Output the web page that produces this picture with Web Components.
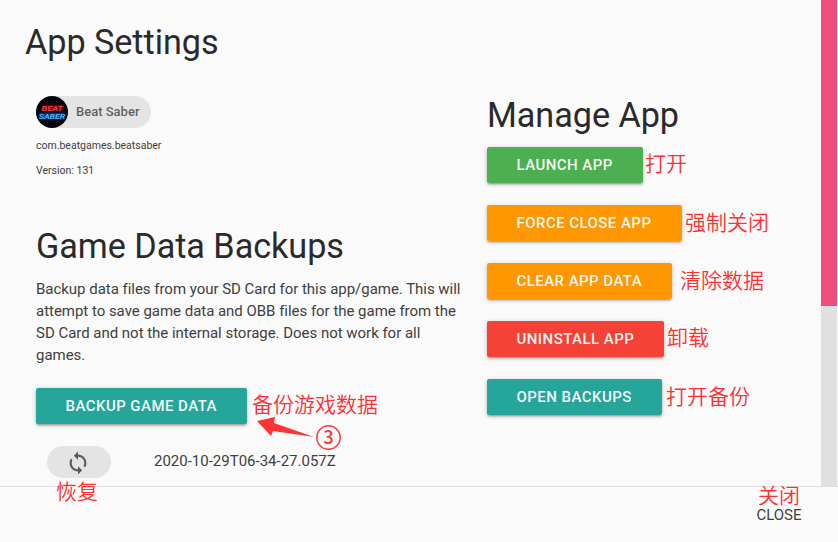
<!DOCTYPE html>
<html lang="en"><head><meta charset="utf-8"><title>App Settings</title>
<style>html,body{margin:0;height:100%;overflow:hidden;background:#fafafa}</style></head><body>
<settings-dialog></settings-dialog>
<script>
const define = (name, html) => customElements.define(name, class extends HTMLElement {
  constructor() {
    super();
    const t = document.createElement('template');
    t.innerHTML = html;
    this.attachShadow({mode: 'open'}).append(t.content.cloneNode(true));
  }
});

define('app-heading', `<style>:host{display:block;font:400 34.2px/38px Roboto,sans-serif;letter-spacing:-.04px;color:#2a2a2a;white-space:nowrap}</style><slot></slot>`);

define('action-button', `<style>
:host{display:flex;box-sizing:border-box;width:var(--w);height:36px;padding-left:29.5px;align-items:center;border-radius:2px;background:var(--bg);color:rgba(255,255,255,.95);font:500 15px/36px Roboto,sans-serif;letter-spacing:.45px;white-space:nowrap;box-shadow:0 2px 2px 0 rgba(0,0,0,.14),0 3px 1px -2px rgba(0,0,0,.12),0 1px 5px 0 rgba(0,0,0,.2)}
</style><slot></slot>`);

define('app-chip', `<style>
:host{display:flex;width:115px;height:32px;border-radius:16px;background:#e4e4e4;align-items:center;font:500 13px/32px Roboto,sans-serif;letter-spacing:0;color:rgba(0,0,0,.6)}
svg{display:block;margin-right:8px}
</style><svg width="32" height="32" viewBox="0 0 32 32">
<defs><filter id="g" x="-20%" y="-50%" width="140%" height="200%"><feGaussianBlur stdDeviation="1.5"/></filter></defs>
<circle cx="16" cy="16" r="16" fill="#020308"/>
<rect x="6" y="9" width="21" height="6" fill="#a30d18" opacity=".65" filter="url(#g)"/><rect x="3" y="17" width="26" height="6" fill="#0755a8" opacity=".8" filter="url(#g)"/>
<g font-family="Roboto,sans-serif" font-size="8" font-weight="500" font-style="italic"><text x="5.5" y="14.700" textLength="21.5" lengthAdjust="spacingAndGlyphs" fill="#ff4048">BEAT</text>
<text x="2.7" y="22.7" textLength="26.5" lengthAdjust="spacingAndGlyphs" fill="#58b9ff">SABER</text></g></svg><slot></slot>`);

define('restore-chip', `<style>:host{display:flex;width:64px;height:32px;border-radius:16px;background:#e4e4e4;align-items:center;justify-content:center}svg{display:block;margin:1px 2px 0 0}</style>
<svg width="24" height="24" viewBox="0 0 24 24" fill="#5b5b5b"><path d="M12 4V1L8 5l4 4V6c3.310 0 6 2.690 6 6 0 1.010-.25 1.970-.7 2.800l1.460 1.460C19.540 15.030 20 13.570 20 12c0-4.420-3.580-8-8-8zm0 14c-3.310 0-6-2.690-6-6 0-1.010.25-1.970.7-2.800L5.240 7.740C4.460 8.970 4 10.430 4 12c0 4.420 3.580 8 8 8v3l4-4-4-4v3z" transform="translate(-.6 -.6) scale(1.050)"/></svg>`);

define('dialog-scrollbar', `<style>:host{display:block;width:16px;height:486px;background:#e0e0e0}div{height:306px;background:#ef4d7b}</style><div></div>`);

define('red-note', `<style>:host{position:absolute;left:var(--x);top:var(--y);font:350 21px/20px "Noto Sans CJK SC",sans-serif;color:#ff3030;white-space:nowrap}</style><slot></slot>`);

define('note-arrow', `<style>:host{position:absolute;left:250px;top:410px}svg{display:block}</style>
<svg width="95" height="45" viewBox="0 0 95 45"><path d="M7 11L25 7L24 13L64 27L23 21L21 26Z" fill="#ff3535"/><circle cx="78.500" cy="27.500" r="11.700" fill="none" stroke="#ff3535" stroke-width="1.500"/><text x="78.500" y="34" text-anchor="middle" font-family="Noto Sans CJK SC,sans-serif" font-size="18.500" font-weight="500" fill="#ff3535">3</text></svg>`);

define('settings-dialog', `<style>
:host{display:flex;flex-direction:column;position:relative;width:838px;height:542px;overflow:hidden;background:#fafafa;font-family:Roboto,sans-serif;color:#404040;font-weight:400}
.body{display:flex;height:486px;border-bottom:1px solid #e0e0e0;overflow:hidden}
.content{width:821px;flex:none}
.title{padding:23px 0 0 25px}
.cols{display:grid;grid-template-columns:451px 1fr;padding:35px 0 0 36px}
.meta{font-size:10.5px;line-height:24px;letter-spacing:0;white-space:nowrap}
.meta.id{margin-top:6px}.meta.v{margin-top:1px}
.backups{margin-top:44px}
p{margin:13px 0 22px;font-size:15px;line-height:22px;letter-spacing:-.025px;white-space:nowrap}
.row{display:flex;align-items:center;margin:22px 0 0 11px;gap:43px;font-size:15px;white-space:nowrap}
.row span{margin-top:-2px}
.manage{display:flex;flex-direction:column;gap:22px}
.manage app-heading{margin-bottom:-9px}
footer{display:flex;height:55px;justify-content:flex-end;padding-right:36.500px;font-size:15px;line-height:57px}
</style>
<div class="body"><main class="content"><app-heading class="title">App Settings</app-heading>
<div class="cols"><section><app-chip>Beat Saber</app-chip><div class="meta id">com.beatgames.beatsaber</div><div class="meta v">Version: 131</div>
<app-heading class="backups">Game Data Backups</app-heading>
<p>Backup data files from your SD Card for this app/game. This will<br>attempt to save game data and OBB files for the game from the<br>SD Card and not the internal storage. Does not work for all<br>games.</p>
<action-button style="--w:211px;--bg:#26a69a">BACKUP GAME DATA</action-button>
<div class="row"><restore-chip></restore-chip><span>2020-10-29T06-34-27.057Z</span></div></section>
<section class="manage"><app-heading>Manage App</app-heading>
<action-button style="--w:156px;--bg:#4caf50">LAUNCH APP</action-button>
<action-button style="--w:195px;--bg:#ff9800">FORCE CLOSE APP</action-button>
<action-button style="--w:185px;--bg:#ff9800">CLEAR APP DATA</action-button>
<action-button style="--w:177px;--bg:#f44336">UNINSTALL APP</action-button>
<action-button style="--w:175px;--bg:#26a69a">OPEN BACKUPS</action-button></section></div></main>
<dialog-scrollbar></dialog-scrollbar></div>
<footer>CLOSE</footer>
<red-note style="--x:645px;--y:152px">打开</red-note>
<red-note style="--x:685px;--y:211px">强制关闭</red-note>
<red-note style="--x:680px;--y:269px">清除数据</red-note>
<red-note style="--x:667px;--y:326px">卸载</red-note>
<red-note style="--x:666px;--y:385px">打开备份</red-note>
<red-note style="--x:252px;--y:393px">备份游戏数据</red-note>
<red-note style="--x:56px;--y:480px">恢复</red-note>
<red-note style="--x:758px;--y:484px">关闭</red-note>
<note-arrow></note-arrow>`);
</script></body></html>
